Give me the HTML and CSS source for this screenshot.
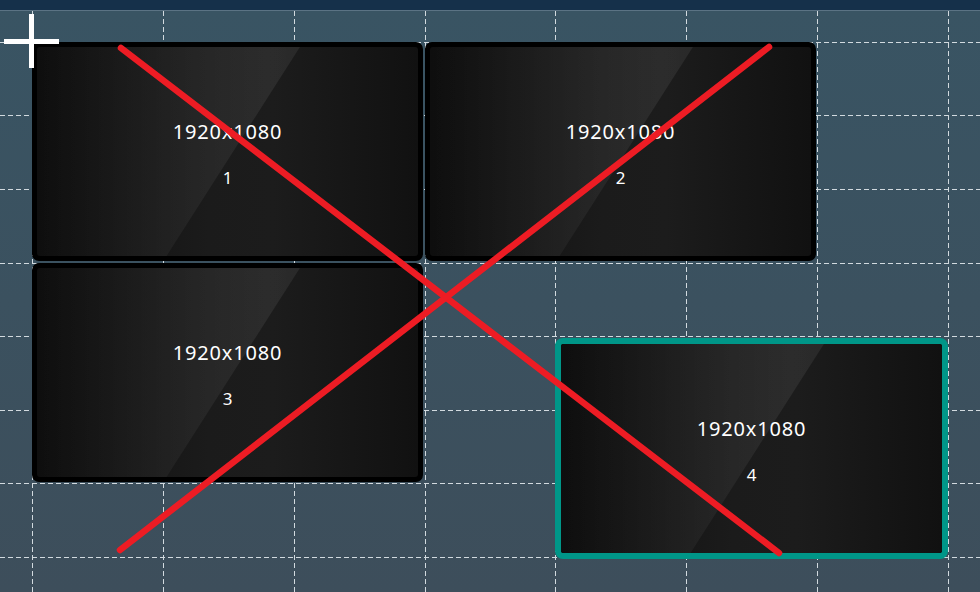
FILE: index.html
```html
<!DOCTYPE html>
<html lang="en">
<head>
    <meta charset="UTF-8">
    <meta name="viewport" content="width=device-width, initial-scale=1.0">
    <title>Screen Layout</title>
    <link rel="stylesheet" href="styles.css">
</head>
<body>
    <div class="topbar"></div>

    <div class="canvas">
        <svg class="grid" width="980" height="581" viewBox="0 0 980 581">
            <g stroke="#d2dadf" stroke-width="1" stroke-dasharray="5 3" fill="none">
                <line x1="32.5" y1="0" x2="32.5" y2="581"/>
                <line x1="163.5" y1="0" x2="163.5" y2="581"/>
                <line x1="294.5" y1="0" x2="294.5" y2="581"/>
                <line x1="425.5" y1="0" x2="425.5" y2="581"/>
                <line x1="555.5" y1="0" x2="555.5" y2="581"/>
                <line x1="686.5" y1="0" x2="686.5" y2="581"/>
                <line x1="817.5" y1="0" x2="817.5" y2="581"/>
                <line x1="948.5" y1="0" x2="948.5" y2="581"/>
                <line x1="0" y1="31.5" x2="980" y2="31.5"/>
                <line x1="0" y1="104.5" x2="980" y2="104.5"/>
                <line x1="0" y1="178.5" x2="980" y2="178.5"/>
                <line x1="0" y1="252.5" x2="980" y2="252.5"/>
                <line x1="0" y1="325.5" x2="980" y2="325.5"/>
                <line x1="0" y1="399.5" x2="980" y2="399.5"/>
                <line x1="0" y1="472.5" x2="980" y2="472.5"/>
                <line x1="0" y1="546.5" x2="980" y2="546.5"/>
            </g>
        </svg>

        <div class="monitor mon-1">
            <div class="screen">
                <span class="resolution">1920x1080</span>
                <span class="index">1</span>
            </div>
        </div>
        <div class="monitor mon-2">
            <div class="screen">
                <span class="resolution">1920x1080</span>
                <span class="index">2</span>
            </div>
        </div>
        <div class="monitor mon-3">
            <div class="screen">
                <span class="resolution">1920x1080</span>
                <span class="index">3</span>
            </div>
        </div>
        <div class="monitor mon-4 selected">
            <div class="screen">
                <span class="resolution">1920x1080</span>
                <span class="index">4</span>
            </div>
        </div>

        <svg class="x-mark" width="980" height="581" viewBox="0 0 980 581">
            <g stroke="#ed1c24" stroke-width="6.5" stroke-linecap="round">
                <line x1="121" y1="37" x2="779" y2="542"/>
                <line x1="769" y1="36" x2="120" y2="539"/>
            </g>
        </svg>

        <div class="cursor">
            <span class="cursor-v"></span>
            <span class="cursor-h"></span>
        </div>
    </div>
</body>
</html>
```

FILE: styles.css
```css
* {
    margin: 0;
    padding: 0;
    box-sizing: border-box;
}

body {
    width: 980px;
    height: 592px;
    overflow: hidden;
    font-family: 'Noto Sans', 'Open Sans', sans-serif;
    background-color: #3b5160;
}

.topbar {
    height: 11px;
    background-color: #15304a;
    border-bottom: 1px solid #5b7384;
}

.canvas {
    position: relative;
    height: 581px;
    background: linear-gradient(#395463, #3d4e5b);
}

.grid,
.x-mark {
    position: absolute;
    top: 0;
    left: 0;
}

.x-mark {
    z-index: 5;
}

/* screens on the arrangement canvas */
.monitor {
    position: absolute;
    width: 391px;
    height: 219px;
    border: 5px solid #000;
    border-radius: 7px;
    background-color: #000;
}

.mon-1 { left: 32px; top: 31px; }
.mon-2 { left: 425px; top: 31px; }
.mon-3 { left: 32px; top: 252px; }
.mon-4 { left: 555px; top: 327px; }

.monitor.selected {
    width: 393px;
    height: 221px;
    border: 6px solid #009688;
    border-radius: 8px;
}

.screen {
    position: relative;
    height: 100%;
    border-radius: 3px;
    overflow: hidden;
    display: flex;
    flex-direction: column;
    align-items: center;
    justify-content: center;
    gap: 24px;
    padding-top: 5px;
    color: #fff;
    background: linear-gradient(to right, #0e0e0e 0%, #1b1b1b 45%, #1c1c1c 62%, #111 100%);
}

.screen::before {
    content: '';
    position: absolute;
    inset: 0;
    clip-path: polygon(0 0, 69% 0, 34% 100%, 0 100%);
    background: linear-gradient(to right, rgba(255, 255, 255, 0) 0%, rgba(255, 255, 255, 0.07) 60%, rgba(255, 255, 255, 0.05) 100%);
}

.resolution {
    position: relative;
    font-size: 20px;
    line-height: 24px;
    letter-spacing: 0.8px;
}

.index {
    position: relative;
    font-size: 17px;
    line-height: 20px;
}

/* crosshair pointer */
.cursor {
    position: absolute;
    left: 4px;
    top: 3px;
    width: 55px;
    height: 54px;
    z-index: 6;
}

.cursor-v {
    position: absolute;
    left: 25px;
    top: 0;
    width: 5px;
    height: 54px;
    background-color: #fff;
}

.cursor-h {
    position: absolute;
    left: 0;
    top: 25px;
    width: 55px;
    height: 5px;
    background-color: #fff;
}
```
